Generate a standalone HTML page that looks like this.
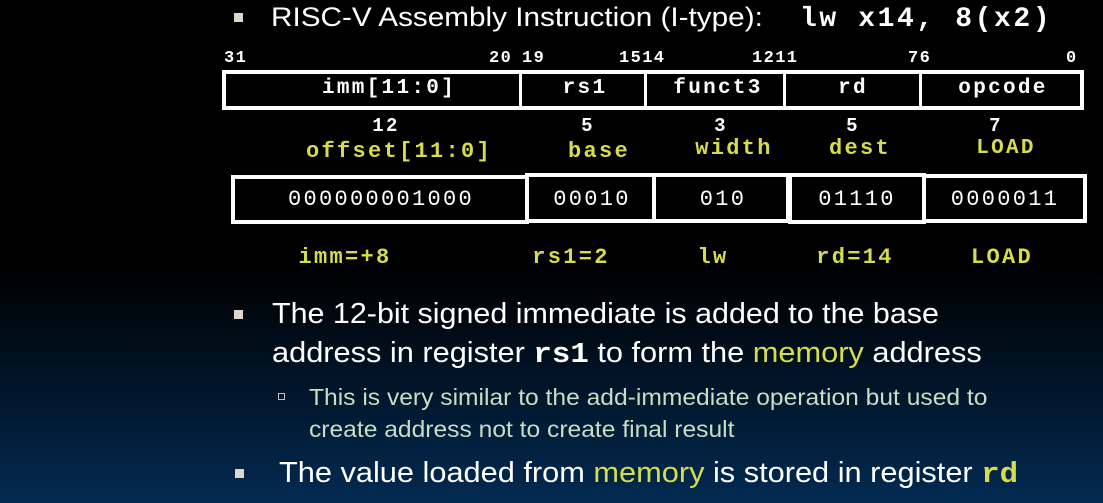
<!DOCTYPE html>
<html><head><meta charset="utf-8"><style>
body{margin:0;width:1103px;height:503px;overflow:hidden;background:linear-gradient(to bottom,#000 0px,#000 270px,#022a52 503px);position:relative;font-family:"Liberation Sans",sans-serif;color:#fff}
.a{position:absolute;white-space:nowrap;line-height:1}
.m{font-family:"Liberation Mono",monospace;font-weight:bold;letter-spacing:2.3px}
.v{font-family:"Liberation Mono",monospace;letter-spacing:2.3px}
.y{color:#d6dc4c}
.c{transform:translateX(-50%)}
.box{position:absolute;border:4px solid #fff;box-sizing:border-box;background:#000}
.sq{position:absolute;width:9px;height:9px;background:#ddd6cc}
.n{font-family:"Liberation Sans",sans-serif;transform-origin:0 0}
.b{font-size:17px;letter-spacing:1.4px}
</style></head><body>
<div class="sq" style="left:234px;top:13px"></div>
<div class="a n" style="left:271px;top:4px;font-size:27px;transform:scaleX(1.1)">RISC-V Assembly Instruction (I-type):</div>
<div class="a m" style="left:800px;top:6px;font-size:28px;letter-spacing:2.6px">lw x14, 8(x2)</div>

<div class="a m b" style="left:224px;top:50px">31</div>
<div class="a m b" style="left:489px;top:50px">20</div>
<div class="a m b" style="left:522px;top:50px">19</div>
<div class="a m b" style="left:619px;top:50px">1514</div>
<div class="a m b" style="left:752px;top:50px">1211</div>
<div class="a m b" style="left:908px;top:50px">76</div>
<div class="a m b" style="left:1066px;top:50px">0</div>
<div class="box" style="left:222px;top:70px;width:862px;height:40px"></div>
<div style="position:absolute;left:519px;top:72px;width:3px;height:36px;background:#fff"></div>
<div style="position:absolute;left:644px;top:72px;width:3px;height:36px;background:#fff"></div>
<div style="position:absolute;left:783px;top:72px;width:3px;height:36px;background:#fff"></div>
<div style="position:absolute;left:919px;top:72px;width:3px;height:36px;background:#fff"></div>
<div class="a m c" style="left:389px;top:78px;font-size:21px">imm[11:0]</div>
<div class="a m c" style="left:585px;top:78px;font-size:21px">rs1</div>
<div class="a m c" style="left:718px;top:78px;font-size:21px">funct3</div>
<div class="a m c" style="left:853px;top:78px;font-size:21px">rd</div>
<div class="a m c" style="left:1003px;top:78px;font-size:21px">opcode</div>

<div class="a m c" style="left:386px;top:117px;font-size:19px">12</div>
<div class="a m c" style="left:588px;top:117px;font-size:19px">5</div>
<div class="a m c" style="left:721px;top:117px;font-size:19px">3</div>
<div class="a m c" style="left:853px;top:117px;font-size:19px">5</div>
<div class="a m c" style="left:996px;top:117px;font-size:19px">7</div>
<div class="a m c y" style="left:399px;top:141px;font-size:22px">offset[11:0]</div>
<div class="a m c y" style="left:599px;top:141px;font-size:22px">base</div>
<div class="a m c y" style="left:734px;top:138px;font-size:22px">width</div>
<div class="a m c y" style="left:860px;top:138px;font-size:22px">dest</div>
<div class="a m c y" style="left:1006px;top:138px;font-size:21px">LOAD</div>

<div class="box" style="left:231px;top:175px;width:298px;height:49px"></div>
<div class="box" style="left:525px;top:173px;width:131px;height:50px"></div>
<div class="box" style="left:652px;top:173px;width:138px;height:50px"></div>
<div class="box" style="left:788px;top:173px;width:138px;height:51px"></div>
<div class="box" style="left:922px;top:174px;width:165px;height:49px"></div>
<div class="a c v" style="left:381px;top:189px;font-size:22px">000000001000</div>
<div class="a c v" style="left:592px;top:189px;font-size:22px">00010</div>
<div class="a c v" style="left:723px;top:189px;font-size:22px">010</div>
<div class="a c v" style="left:857px;top:189px;font-size:22px">01110</div>
<div class="a c v" style="left:1005px;top:189px;font-size:22px">0000011</div>

<div class="a m c y" style="left:345px;top:247px;font-size:22px">imm=+8</div>
<div class="a m c y" style="left:571px;top:247px;font-size:22px">rs1=2</div>
<div class="a m c y" style="left:713px;top:247px;font-size:22px">lw</div>
<div class="a m c y" style="left:855px;top:247px;font-size:22px">rd=14</div>
<div class="a m c y" style="left:1002px;top:247px;font-size:22px">LOAD</div>

<div class="sq" style="left:234px;top:310px"></div>
<div class="a n" style="left:272px;top:300px;font-size:29px;transform:scaleX(1.05)">The 12-bit signed immediate is added to the base</div>
<div class="a n" style="left:272px;top:339px;font-size:29px;transform:scaleX(1.06)">address in register <span style="font-family:'Liberation Mono',monospace;font-weight:bold">rs1</span> to form the <span class="y">memory</span> address</div>
<div style="position:absolute;left:278px;top:393px;width:5px;height:5px;border:1px solid #b8c8b8"></div>
<div class="a n" style="left:309px;top:386px;font-size:23px;transform:scaleX(1.07);color:#c9ddc4">This is very similar to the add-immediate operation but used to</div>
<div class="a n" style="left:309px;top:418px;font-size:23px;transform:scaleX(1.07);color:#c9ddc4">create address not to create final result</div>
<div class="sq" style="left:235px;top:469px"></div>
<div class="a n" style="left:279px;top:459px;font-size:29px;transform:scaleX(1.06)">The value loaded from <span class="y">memory</span> is stored in register <span class="y" style="font-family:'Liberation Mono',monospace;font-weight:bold">rd</span></div>
</body></html>
